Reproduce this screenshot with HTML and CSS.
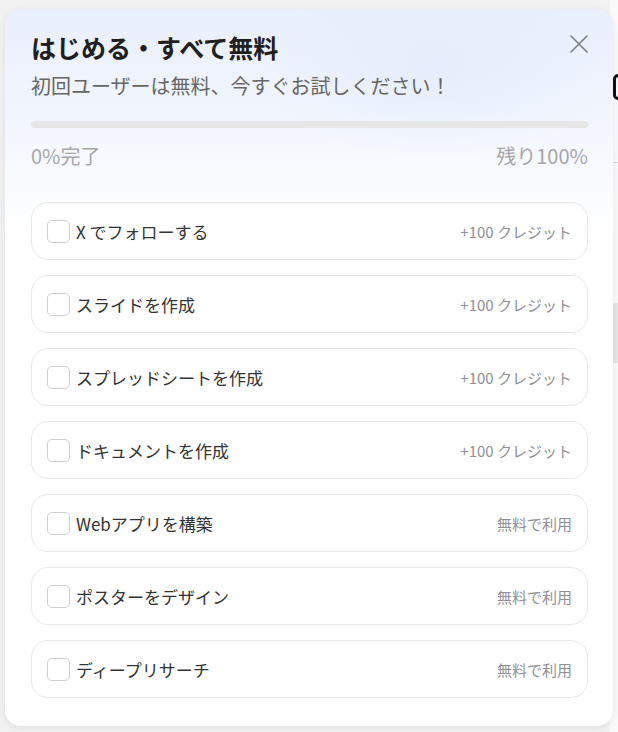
FILE: index.html
```html
<!DOCTYPE html>
<html lang="ja">
<head>
<meta charset="utf-8">
<link rel="stylesheet" href="styles.css">
</head>
<body>
<div class="backdrop">
  <div class="behind">
    <div class="behind-o"></div>
    <div class="behind-line"></div>
    <div class="behind-gray"></div>
  </div>
  <div class="modal">
    <div class="head">
      <h1 class="title">はじめる・すべて無料</h1>
      <button class="close" aria-label="close">
        <svg width="20" height="20" viewBox="0 0 20 20"><path d="M2 2 L18 18 M18 2 L2 18" stroke="#777" stroke-width="1.5" fill="none" stroke-linecap="round"/></svg>
      </button>
    </div>
    <p class="sub">初回ユーザーは無料、今すぐお試しください！</p>
    <div class="bar"><div class="fill" style="width:0%"></div></div>
    <div class="progress-text"><span>0%完了</span><span>残り100%</span></div>
    <ul class="tasks">
      <li class="task"><span class="check"></span><span class="label">X でフォローする</span><span class="reward">+100 クレジット</span></li>
      <li class="task"><span class="check"></span><span class="label">スライドを作成</span><span class="reward">+100 クレジット</span></li>
      <li class="task"><span class="check"></span><span class="label">スプレッドシートを作成</span><span class="reward">+100 クレジット</span></li>
      <li class="task"><span class="check"></span><span class="label">ドキュメントを作成</span><span class="reward">+100 クレジット</span></li>
      <li class="task"><span class="check"></span><span class="label">Webアプリを構築</span><span class="reward">無料で利用</span></li>
      <li class="task"><span class="check"></span><span class="label">ポスターをデザイン</span><span class="reward">無料で利用</span></li>
      <li class="task"><span class="check"></span><span class="label">ディープリサーチ</span><span class="reward">無料で利用</span></li>
    </ul>
  </div>
</div>
</body>
</html>
```
FILE: styles.css
```css
* { box-sizing: border-box; }
html, body {
  margin: 0;
  padding: 0;
  width: 618px;
  height: 732px;
  overflow: hidden;
  background: #f2f2f2;
  font-family: "Noto Sans CJK JP", "Noto Sans", sans-serif;
}
.backdrop {
  position: relative;
  width: 618px;
  height: 732px;
  padding: 9px 5px 6px 5px;
}
.behind {
  position: absolute;
  right: 0;
  top: 0;
  width: 8px;
  height: 732px;
  background: #fafafa;
}
.behind-o {
  position: absolute;
  left: 3px;
  top: 74px;
  width: 10px;
  height: 26px;
  border: 3px solid #111;
  border-radius: 6px;
}
.behind-line {
  position: absolute;
  left: 0;
  top: 162px;
  width: 8px;
  height: 1px;
  background: #ddd;
}
.behind-gray {
  position: absolute;
  left: 0;
  top: 303px;
  width: 8px;
  height: 60px;
  background: #e6e6e6;
}
.modal {
  position: relative;
  height: 717px;
  border-radius: 16px;
  background:
    radial-gradient(ellipse 180px 90px at 430px 60px, rgba(226,236,253,0.7), rgba(226,236,253,0) 100%),
    linear-gradient(180deg, #e9effc 0%, #f1f5fd 14%, #f9fbfe 24%, #ffffff 32%);
  box-shadow: 0 2px 8px rgba(0,0,0,0.08);
  padding: 22px 25px 0 26px;
}
.head {
  display: flex;
  justify-content: space-between;
  align-items: flex-start;
}
.title {
  margin: 0;
  font-size: 25px;
  line-height: 32px;
  font-weight: 700;
  color: #1f1f1f;
}
.close {
  border: 0;
  background: none;
  padding: 0;
  margin: 2px -2px 0 0;
  width: 22px;
  height: 22px;
  display: flex;
  align-items: center;
  justify-content: center;
}
.sub {
  margin: 9px 0 0 0;
  font-size: 20px;
  line-height: 28px;
  color: #666;
}
.bar {
  margin-top: 21px;
  height: 7px;
  border-radius: 4px;
  background: #e6e6e6;
  overflow: hidden;
}
.fill { height: 100%; background: #4f7cff; }
.progress-text {
  display: flex;
  justify-content: space-between;
  margin-top: 14px;
  font-size: 20px;
  line-height: 28px;
  color: #a6a6ab;
}
.tasks {
  list-style: none;
  margin: 32px 0 0 0;
  padding: 0;
  display: flex;
  flex-direction: column;
  gap: 15px;
}
.task {
  height: 58px;
  border: 1px solid #e8e8ea;
  border-radius: 17px;
  background: #fff;
  display: flex;
  align-items: center;
  padding: 0 15px 0 15px;
}
.check {
  width: 23px;
  height: 23px;
  border: 1px solid #cfcfd2;
  border-radius: 5px;
  background: #fff;
  flex: none;
}
.label {
  margin-left: 6px;
  font-size: 17px;
  color: #333;
  flex: 1;
}
.reward {
  font-size: 15px;
  color: #909095;
}
```
